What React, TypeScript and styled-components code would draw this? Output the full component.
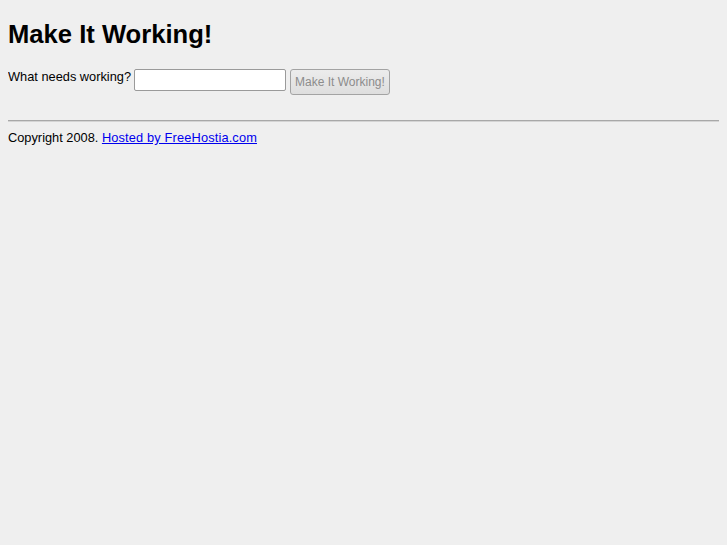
import React from 'react'
import styled, { createGlobalStyle } from 'styled-components'

const GlobalStyle = createGlobalStyle`
  html, body {
    background: #efefef;
  }
  body {
    margin: 8px;
    font-family: "Liberation Sans", Arial, sans-serif;
    font-size: 12.8px;
    color: #000;
  }
`

const Title = styled.h1`
  font-size: 25.6px;
  font-weight: bold;
  margin: 11px 0 20px;
  line-height: 30px;
`

const Form = styled.form`
  display: flex;
  align-items: flex-start;
  gap: 3px;
  margin: 0 0 25px;
`

const Label = styled.label`
  line-height: 16px;
`

const Input = styled.input`
  width: 152px;
  height: 22px;
  box-sizing: border-box;
  border: 1px solid #9a9a9a;
  border-radius: 2px;
  background: #fff;
  padding: 2px 4px;
  font: inherit;
`

const Button = styled.button`
  height: 26px;
  margin-left: 1px;
  padding: 0 4px;
  border: 1px solid #a3a3a3;
  border-radius: 3px;
  background: linear-gradient(#ececec, #dedede);
  color: #8c8c8c;
  font-family: "Liberation Sans", Arial, sans-serif;
  font-size: 12px;
`

const Rule = styled.hr`
  margin: 0;
  border: none;
  border-top: 1px solid #a8a8a8;
  border-bottom: 1px solid #d4d4d4;
`

const Footer = styled.p`
  margin: 8px 0;
  line-height: 16px;

  a {
    color: #0000ee;
    letter-spacing: 0.15px;
  }
`

const App = () => {
  return (
    <>
      <GlobalStyle />
      <Title>Make It Working!</Title>
      <Form onSubmit={(e) => e.preventDefault()}>
        <Label htmlFor='what'>What needs working?</Label>
        <Input id='what' type='text' />
        <Button type='submit' disabled>Make It Working!</Button>
      </Form>
      <Rule />
      <Footer>
        Copyright 2008. <a href='#'>Hosted by FreeHostia.com</a>
      </Footer>
    </>
  )
}

export default App
